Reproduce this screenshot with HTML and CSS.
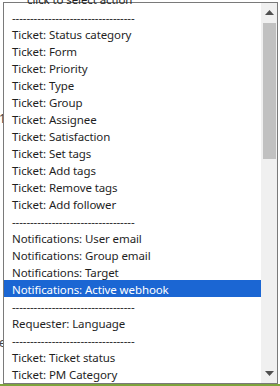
FILE: index.html
```html
<!DOCTYPE html>
<html>
<head>
    <title>Action picker</title>
    <link rel="stylesheet" href="styles.css">
</head>
<body>
<div class="page">
    <span class="behind behind-one">1</span>
    <span class="behind behind-e">e</span>
    <div class="listbox">
        <div class="options">
            <div class="option placeholder">click to select action</div>
            <div class="option">----------------------------------</div>
            <div class="option">Ticket: Status category</div>
            <div class="option">Ticket: Form</div>
            <div class="option">Ticket: Priority</div>
            <div class="option">Ticket: Type</div>
            <div class="option">Ticket: Group</div>
            <div class="option">Ticket: Assignee</div>
            <div class="option">Ticket: Satisfaction</div>
            <div class="option">Ticket: Set tags</div>
            <div class="option">Ticket: Add tags</div>
            <div class="option">Ticket: Remove tags</div>
            <div class="option">Ticket: Add follower</div>
            <div class="option">----------------------------------</div>
            <div class="option">Notifications: User email</div>
            <div class="option">Notifications: Group email</div>
            <div class="option">Notifications: Target</div>
            <div class="option selected">Notifications: Active webhook</div>
            <div class="option">----------------------------------</div>
            <div class="option">Requester: Language</div>
            <div class="option">----------------------------------</div>
            <div class="option">Ticket: Ticket status</div>
            <div class="option">Ticket: PM Category</div>
            <div class="option">Ticket: Brand</div>
        </div>
        <div class="scrollbar">
            <div class="arrow-btn">
                <svg width="9" height="5" viewBox="0 0 9 5"><path d="M0 5 L4.5 0 L9 5 Z" fill="#505050"/></svg>
            </div>
            <div class="track">
                <div class="thumb"></div>
            </div>
            <div class="arrow-btn">
                <svg width="9" height="5" viewBox="0 0 9 5"><path d="M0 0 L9 0 L4.5 5 Z" fill="#505050"/></svg>
            </div>
        </div>
    </div>
    <div class="green-line"></div>
</div>
</body>
</html>
```

FILE: styles.css
```css
html, body {
    margin: 0;
    padding: 0;
    overflow: hidden;
    background-color: #ffffff;
}
.page {
    position: relative;
    width: 280px;
    height: 386px;
    padding: 2px 0 0 3px;
    box-sizing: border-box;
    font-family: "Noto Sans", "Open Sans", sans-serif;
    font-size: 11.5px;
    letter-spacing: -0.1px;
}
.behind {
    position: absolute;
    left: -1px;
    color: #444;
    font-size: 12px;
}
.behind-one {
    top: 110px;
}
.behind-e {
    top: 334px;
}
.listbox {
    position: relative;
    z-index: 1;
    display: flex;
    width: 275px;
    height: 382px;
    box-sizing: border-box;
    border: 1px solid #7a7a7a;
    background: #ffffff;
}
.options {
    flex: 1;
    clip-path: inset(-5px 0 0 0);
}
.option {
    height: 17px;
    box-sizing: border-box;
    padding: 2px 0 0 8px;
    line-height: 15px;
    color: #1f1f1f;
    white-space: nowrap;
}
.option.placeholder {
    margin-top: -13px;
    padding-left: 23px;
}
.option.placeholder + .option {
    margin-top: 1px;
}
.option.selected {
    background-color: #1b66d3;
    color: #ffffff;
}
.scrollbar {
    width: 16px;
    display: flex;
    flex-direction: column;
    background-color: #f0f0f0;
}
.arrow-btn {
    height: 19px;
    display: flex;
    align-items: center;
    justify-content: center;
    padding-left: 1px;
}
.track {
    flex: 1;
    padding-top: 1px;
}
.thumb {
    height: 136px;
    margin: 0 1px 0 2px;
    background-color: #c1c1c1;
}
.green-line {
    height: 2px;
    margin-left: -3px;
    background-color: #7da33c;
}
```
